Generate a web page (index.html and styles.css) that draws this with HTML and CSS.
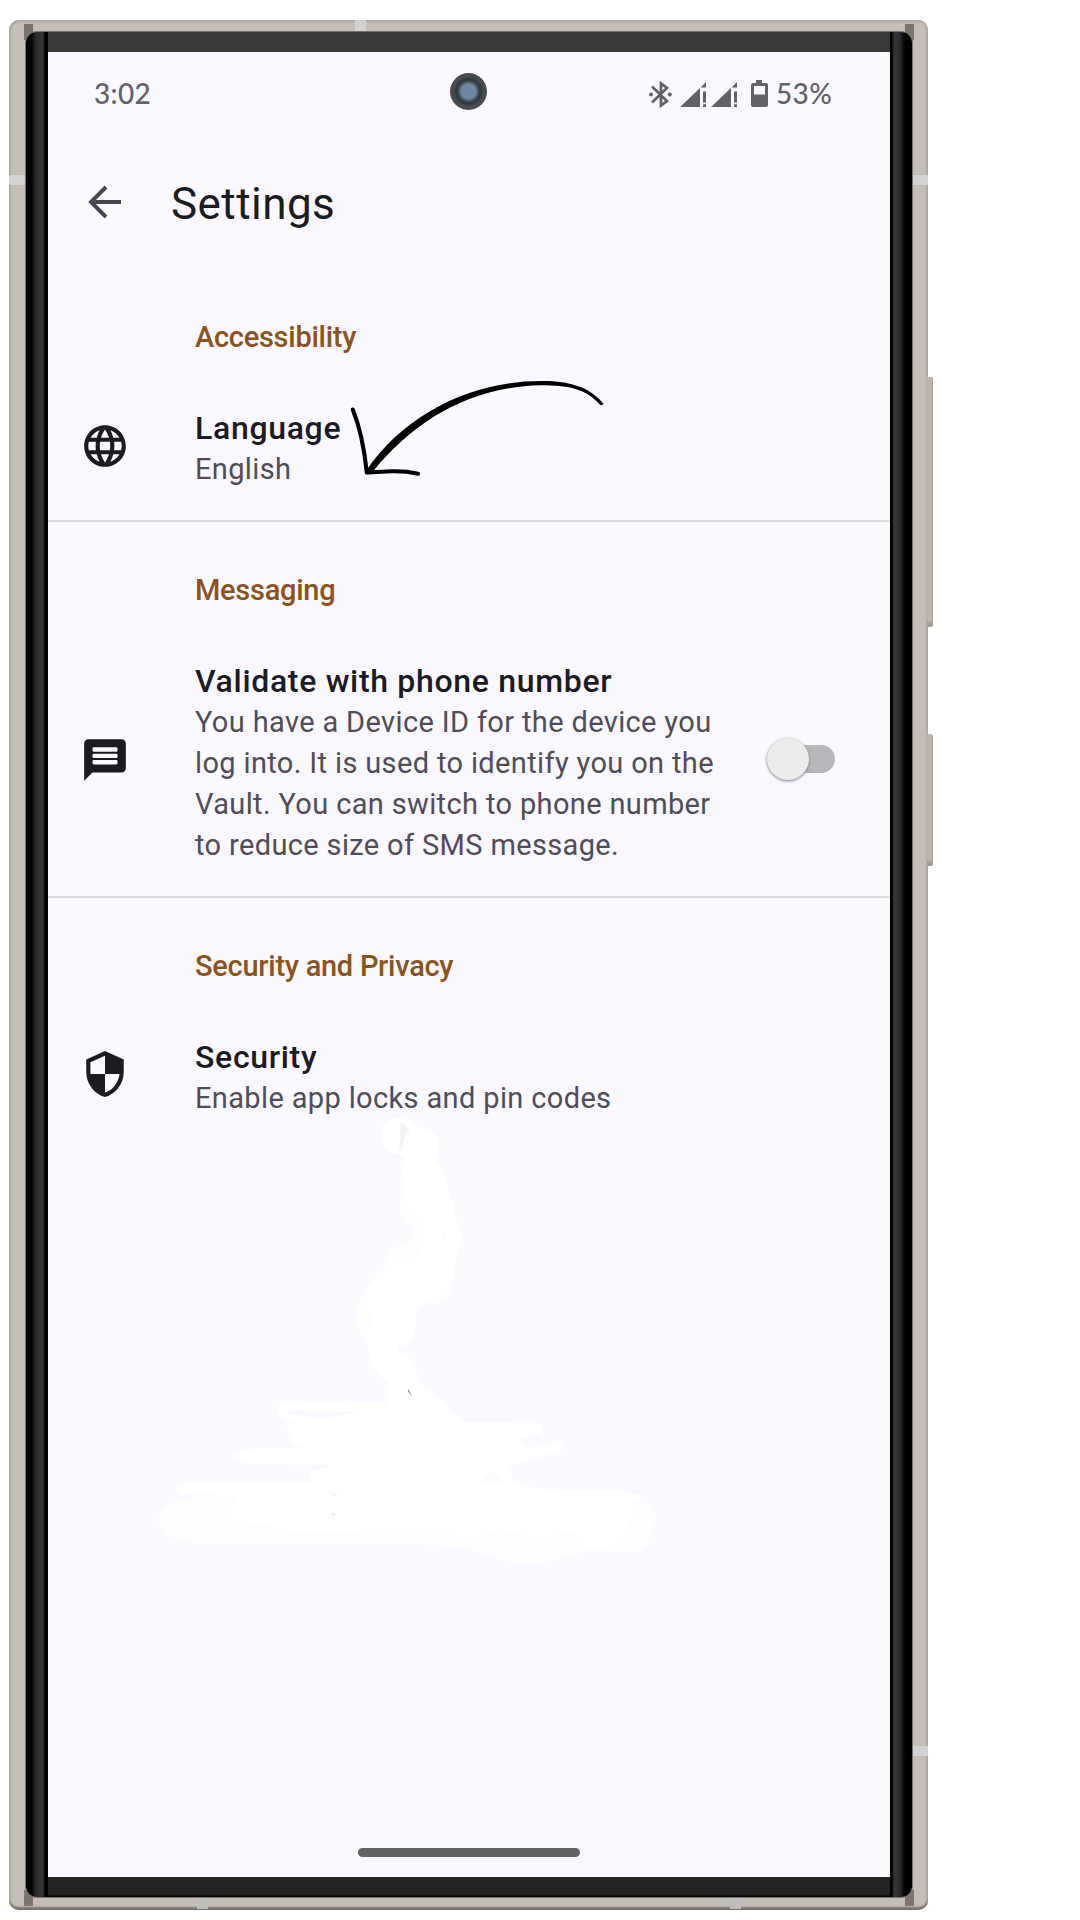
FILE: index.html
```html
<!DOCTYPE html>
<html lang="en">
<head>
<meta charset="utf-8">
<title>Settings</title>
<link rel="stylesheet" href="styles.css">
</head>
<body>
<div class="phone">
  <i class="corner tl"></i><i class="corner tr"></i><i class="corner bl"></i><i class="corner br"></i>
  <i class="band top"></i><i class="band left"></i><i class="band right"></i><i class="band right-low"></i><i class="band bottom-a"></i><i class="band bottom-b"></i>
  <i class="side-button volume"></i><i class="side-button power"></i>
  <div class="bezel">
    <main class="screen">
      <div class="status-bar">
        <span class="time">3:02</span>
        <span class="camera"></span>
        <div class="status-icons">
          <svg class="bluetooth" viewBox="0 0 23 27"><path d="M3 5.500 18 20 12 24.500V2.500L18 7 3 21.500" fill="none" stroke="currentColor" stroke-width="2.700"/><circle cx="2" cy="13.500" r="2"/><circle cx="20.800" cy="13.500" r="2"/></svg>
          <svg class="signal" viewBox="0 0 27 27"><path d="M0 26 20 7v19zM20.500 6.500 26 1v5.500zM23 10.500h3v11h-3zM23 23.200h3V26h-3z"/></svg>
          <svg class="signal second" viewBox="0 0 27 27"><path d="M0 26 20 7v19zM20.500 6.500 26 1v5.500zM23 10.500h3v11h-3zM23 23.200h3V26h-3z"/></svg>
          <svg class="battery" viewBox="0 0 17 27"><path fill-rule="evenodd" d="M5 0h6v3h4q2 0 2 2v20q0 2-2 2H2q-2 0-2-2V5q0-2 2-2h3zM3 6v8.500h11V6z"/></svg>
          <span class="percent">53%</span>
        </div>
      </div>
      <header class="app-bar">
        <svg class="back" viewBox="0 0 34 34"><path d="M33 17H3M18 2 3 17l15 15" fill="none" stroke="currentColor" stroke-width="3.900"/></svg>
        <h1>Settings</h1>
      </header>
      <section class="first">
        <h2>Accessibility</h2>
        <div class="item">
          <svg class="icon" viewBox="0 0 24 24"><path d="M11.990 2C6.470 2 2 6.480 2 12s4.470 10 9.990 10C17.520 22 22 17.520 22 12S17.520 2 11.990 2zm6.930 6h-2.950c-.32-1.250-.78-2.450-1.380-3.560 1.840.63 3.370 1.910 4.330 3.560zM12 4.040c.83 1.200 1.480 2.530 1.910 3.960h-3.820c.43-1.430 1.080-2.760 1.910-3.960zM4.260 14C4.100 13.360 4 12.690 4 12s.1-1.360.26-2h3.380c-.08.66-.14 1.320-.14 2s.06 1.340.14 2H4.260zm.82 2h2.950c.32 1.250.78 2.450 1.380 3.560-1.840-.63-3.370-1.900-4.330-3.560zm2.950-8H5.080c.96-1.660 2.490-2.930 4.330-3.560C8.810 5.550 8.350 6.750 8.030 8zM12 19.960c-.83-1.200-1.480-2.530-1.910-3.960h3.820c-.43 1.430-1.080 2.760-1.910 3.960zM14.340 14H9.660c-.09-.66-.16-1.320-.16-2s.07-1.350.16-2h4.680c.09.65.16 1.320.16 2s-.07 1.340-.16 2zm.25 5.560c.6-1.110 1.060-2.310 1.380-3.560h2.950c-.96 1.650-2.490 2.930-4.330 3.560zM16.360 14c.08-.66.14-1.320.14-2s-.06-1.340-.14-2h3.380c.16.64.26 1.310.26 2s-.1 1.360-.26 2h-3.380z"/></svg>
          <div class="copy"><h3>Language</h3><p>English</p></div>
        </div>
      </section>
      <section>
        <h2>Messaging</h2>
        <div class="item">
          <svg class="icon" viewBox="0 0 24 24"><path fill-rule="evenodd" d="M4 2h16a2 2 0 0 1 2 2v12a2 2 0 0 1-2 2H6l-4 4V4a2 2 0 0 1 2-2zM6.600 5.900a.6.600 0 0 0-.6.600v.9a.6.600 0 0 0 .6.600h10.800a.6.600 0 0 0 .6-.6v-.9a.6.600 0 0 0-.6-.6zM6.600 9a.6.600 0 0 0-.6.600v.8a.6.600 0 0 0 .6.600h10.800a.6.600 0 0 0 .6-.6v-.8a.6.600 0 0 0-.6-.6zM6.600 12a.6.600 0 0 0-.6.600v.9a.6.600 0 0 0 .6.600h10.800a.6.600 0 0 0 .6-.6v-.9a.6.600 0 0 0-.6-.6z"/></svg>
          <div class="copy"><h3>Validate with phone number</h3><p>You have a Device ID for the device you<br>log into. It is used to identify you on the<br>Vault. You can switch to phone number<br>to reduce size of SMS message.</p></div>
          <span class="switch"></span>
        </div>
      </section>
      <section class="last">
        <h2>Security and Privacy</h2>
        <div class="item">
          <svg class="icon" viewBox="0 0 24 24"><path d="M12 1 3 5v6c0 5.550 3.840 10.740 9 12 5.160-1.260 9-6.450 9-12V5l-9-4zm0 10.990h7c-.53 4.120-3.280 7.790-7 8.940V12H5V6.300l7-3.110v8.800z"/></svg>
          <div class="copy"><h3>Security</h3><p>Enable app locks and pin codes</p></div>
        </div>
      </section>
      <div class="home-bar"></div>
    </main>
  </div>
</div>

<svg class="eraser" viewBox="0 0 1568 1440" preserveAspectRatio="none">
  <g fill="#fdfdfe">
    <path d="M768 250Q740 330 765 362 785 385 795 380 785 410 775 432 715 435 710 500 655 540 625 650 640 715 663 742L760 700 826 602Q895 625 907 560L918 470 935 420Q935 390 910 360L890 250z"/>
    <path d="M250 1188Q90 1190 62 1228 40 1260 70 1300 95 1325 190 1330L760 1330Q910 1335 1000 1362L1105 1395 1160 1390 1310 1352 1440 1357Q1480 1350 1480 1300 1500 1275 1495 1245 1480 1205 1440 1200L900 1160z"/>
  </g>
  <g fill="#fff">
    <path d="M752 53Q700 55 700 107 702 160 752 163L770 178Q758 195 766 230 768 270 772 300 780 335 830 358L825 430 800 482Q730 485 702 545 670 550 665 580L672 660Q655 750 670 790 690 830 716 842L722 862 714 912 445 903Q400 903 400 932 400 955 455 970 426 975 426 990 428 1002 445 1006 430 1018 438 1030 448 1038 470 1036V1046H330Q264 1050 264 1070 270 1090 340 1092L550 1094V1101Q490 1105 490 1127 492 1142 510 1145L145 1147Q105 1150 105 1165 108 1184 165 1184L282 1187Q270 1200 278 1217 258 1235 268 1258 300 1275 392 1275 405 1298 540 1298 620 1298 672 1285L918 1280Q910 1300 922 1310 940 1313 1040 1290L1150 1305 1265 1295Q1280 1342 1320 1348 1370 1345 1400 1300 1430 1270 1424 1205 1455 1205 1455 1190 1452 1177 1380 1175L1205 1172Q1170 1162 1125 1162 1115 1150 1083 1148 1080 1112 1058 1098L1150 1077 1220 1052Q1234 1035 1215 1027 1205 1027 1160 1041L1118 1045Q1116 1024 1097 1019L1145 1008Q1170 1000 1170 982 1168 970 1145 969L932 965Q900 925 875 903 865 888 827 868 808 840 784 775 775 755 750 757V740Q800 735 800 680V642Q820 625 826 600 870 585 908 530L918 470 935 415Q925 380 915 350 910 290 890 265 890 215 860 190L855 175Q870 155 865 120 855 82 800 80 780 55 752 53z"/>
  </g>
  <path fill="#fbf8ff" d="M425 935Q450 928 660 937 590 940 550 955 490 955 425 940z"/>
  <path fill="#f4f4f5" d="M757 66 784 90Q764 107 764 130L753 160z"/>
  <path fill="#fbfbfc" d="M876 392h9v15l-6 25zM1005 1110q50 8 55 35h-90q35-10 35-20zM730 946l40 2-35 2z"/>
  <path fill="#777" d="M778 866l5 9 9 15-13-15z"/><path fill="#ccc" d="M553 1241l16 2-8 2zM563 1187l16-2-14 4z"/>
</svg>

<svg class="pointer" viewBox="340 370 280 120">
  <path d="M603.500 403.800C602.500 405.800 600.300 405.500 599 403.800C586 388.500 567 385.200 541 385.200C470 387 415 420 372.500 472C370 475.500 365 475 366 471C406 412 474 381 541 381.100C571 380.300 592 389 603.500 403.800Z"/>
  <path d="M352.800 409.500C361 430 364.500 450 366.800 472.500L392 471.300Q406 471 418 473.700" fill="none" stroke="#000" stroke-width="4.100" stroke-linecap="round" stroke-linejoin="round"/>
</svg>
</body>
</html>
```
FILE: styles.css
```css
* { box-sizing: border-box; }
body { margin: 0; width: 1080px; height: 1920px; overflow: hidden; position: relative; background: #fff; padding: 20px 0 0 9px; font-family: Roboto, "Liberation Sans", sans-serif; }
h1, h2, h3, p { margin: 0; font-weight: 400; }
svg { display: block; flex: none; fill: currentColor; }

.phone { position: relative; width: 919px; height: 1890px; padding: 12px 16px 13px 17px; border-radius: 10px; background: #c4beb6; box-shadow: inset 0 -4px 2px -1px #77716b, inset 2px 2px 1px #aeaaa3, inset -2px 0 1px #aeaaa3; }
.bezel { position: relative; height: 1865px; padding: 20px 22px; border-radius: 11px; background: linear-gradient(90deg, #000 0 5px, #2c2c2c 10px, #363636 17px, #000 19px 22px, transparent 22px 864px, #000 864px 866px, #363636 868px, #2c2c2c 874px, #000 879px), linear-gradient(#393939 0 1000px, #242424 1800px 1862px, #000); box-shadow: 0 0 0 1px #77736e; }
.screen { height: 1825px; display: flex; flex-direction: column; background: #fbf8ff; color: #1c1b22; }

.corner { position: absolute; width: 9px; height: 16px; background: #7c756d; }
.tl { left: 15px; top: 4px; } .tr { right: 14px; top: 4px; } .bl { left: 15px; bottom: 4px; } .br { right: 14px; bottom: 4px; }
.band { position: absolute; background: #d2d2d1; }
.top { left: 346px; top: 0; width: 11px; height: 12px; }
.left { left: 0; top: 155px; width: 17px; height: 10px; }
.right { right: 0; top: 155px; width: 17px; height: 10px; }
.right-low { right: 0; top: 1726px; width: 17px; height: 10px; }
.bottom-a { left: 188px; bottom: 1px; width: 11px; height: 12px; background: #bdbdbc; }
.bottom-b { left: 721px; bottom: 1px; width: 11px; height: 12px; background: #bdbdbc; }
.side-button { position: absolute; left: 918px; width: 6px; border-radius: 0 3px 3px 0; background: #bcb5ac; box-shadow: inset -1px 0 #aaa49b, inset 0 -7px 2px -2px #a19b93; }
.volume { top: 357px; height: 250px; }
.power { top: 714px; height: 132px; }

.status-bar { height: 84px; padding: 0 58px 0 46px; display: grid; grid-template-columns: 356px 37px 1fr; align-items: center; color: #626266; font: 500 28px Lato, sans-serif; }
.time, .percent { margin-top: -2px; letter-spacing: .3px; }
.camera { width: 37px; height: 37px; margin-top: -6px; border-radius: 50%; background: radial-gradient(circle, #6d88a5 0 7px, #526679 9px, #343c43 11px 13px, #4a4c4c 15px); }
.status-icons { display: flex; align-items: center; justify-content: flex-end; }
.bluetooth { width: 23px; height: 27px; margin-right: 8px; }
.signal { width: 27px; height: 27px; }
.second { margin-left: 4px; }
.battery { width: 17px; height: 27px; margin: -1px 8px 0 13px; }

.app-bar { height: 132px; padding: 0 0 1px 40px; display: flex; align-items: center; gap: 49px; color: #49454f; }
.back { width: 34px; height: 34px; }
h1 { font-size: 44px; line-height: 52px; letter-spacing: .45px; color: #1c1b20; padding-top: 4px; }

section { padding: 48px 0 30px; border-bottom: 2px solid #dedce3; }
.first { padding-top: 49px; }
.first h2 { margin-bottom: 50px; }
.last { border: 0; }
h2 { margin-left: 147px; margin-bottom: 50px; font-size: 29px; line-height: 41px; font-weight: 500; letter-spacing: -.27px; color: #8a5320; }
.item { display: flex; align-items: center; padding: 0 55px 0 32px; }
.icon { width: 50px; height: 50px; margin-right: 65px; margin-bottom: 8px; }
.first .icon { margin-bottom: 7px; }
.copy { flex: 1; white-space: nowrap; }
h3 { font-size: 32px; line-height: 41px; font-weight: 500; letter-spacing: .68px; }
p { font-size: 29px; line-height: 41px; letter-spacing: .36px; color: #504d57; }
.switch { position: relative; width: 64px; height: 28px; margin-bottom: 9px; border-radius: 14px; background: #b8b6bb; }
.switch::before { content: ""; position: absolute; left: -4px; top: -7px; width: 42px; height: 42px; border-radius: 50%; background: #ececec; box-shadow: 0 1px 3px #77777a; }
.home-bar { width: 222px; height: 9px; margin: auto auto 20px; border-radius: 5px; background: #626264; }

.eraser { position: absolute; left: 140px; top: 1100px; width: 540px; height: 480px; }
.pointer { position: absolute; left: 340px; top: 370px; width: 280px; height: 120px; }
```
